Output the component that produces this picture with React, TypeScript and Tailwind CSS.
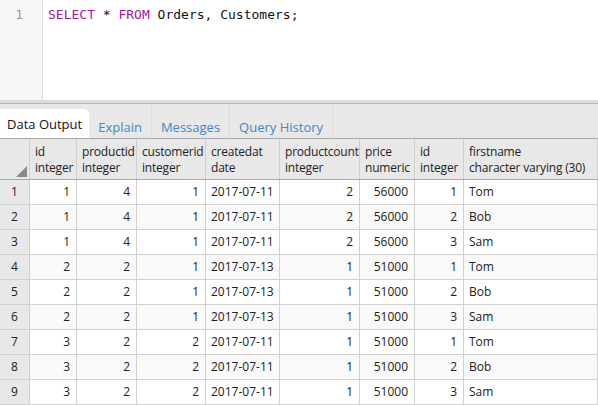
const columns = [
  { name: 'id', type: 'integer', align: 'right' },
  { name: 'productid', type: 'integer', align: 'right' },
  { name: 'customerid', type: 'integer', align: 'right' },
  { name: 'createdat', type: 'date', align: 'left' },
  { name: 'productcount', type: 'integer', align: 'right' },
  { name: 'price', type: 'numeric', align: 'right' },
  { name: 'id', type: 'integer', align: 'right' },
  { name: 'firstname', type: 'character varying (30)', align: 'left' },
];

const rows = [
  ['1', '4', '1', '2017-07-11', '2', '56000', '1', 'Tom'],
  ['1', '4', '1', '2017-07-11', '2', '56000', '2', 'Bob'],
  ['1', '4', '1', '2017-07-11', '2', '56000', '3', 'Sam'],
  ['2', '2', '1', '2017-07-13', '1', '51000', '1', 'Tom'],
  ['2', '2', '1', '2017-07-13', '1', '51000', '2', 'Bob'],
  ['2', '2', '1', '2017-07-13', '1', '51000', '3', 'Sam'],
  ['3', '2', '2', '2017-07-11', '1', '51000', '1', 'Tom'],
  ['3', '2', '2', '2017-07-11', '1', '51000', '2', 'Bob'],
  ['3', '2', '2', '2017-07-11', '1', '51000', '3', 'Sam'],
];

const tabs = ['Explain', 'Messages', 'Query History'];

const gridCols =
  'grid grid-cols-[30px_47px_60px_69px_74px_80px_55px_49px_134px]';

export default function App() {
  return (
    <div
      className="w-[598px] h-[405px] overflow-hidden bg-white text-[13px] text-[#222]"
      style={{ fontFamily: '"Open Sans", "Liberation Sans", sans-serif' }}
    >
      {/* Query editor */}
      <div className="flex h-[100px] bg-white">
        <div className="w-[43px] shrink-0 bg-[#f7f7f7] border-r border-[#dddddd] pt-[6px] pr-[19px] text-right text-[#999] leading-[18px]"
          style={{ fontFamily: '"DejaVu Sans Mono", "Liberation Mono", monospace' }}
        >
          1
        </div>
        <div
          className="pl-[5px] pt-[6px] leading-[18px] text-[13px] text-[#111]"
          style={{ fontFamily: '"DejaVu Sans Mono", "Liberation Mono", monospace' }}
        >
          <span className="text-[#9b1c9b]">SELECT</span> * <span className="text-[#9b1c9b]">FROM</span> Orders, Customers;
        </div>
      </div>

      {/* Splitter */}
      <div className="h-[3px] bg-[#dcdcdc]" />
      <div className="h-px bg-[#b8b8b8]" />

      {/* Tabs */}
      <div className="flex items-end h-[34px] bg-[#e8e8e8]">
        <div className="h-[29px] flex items-center px-[7px] pt-[3px] bg-white rounded-tr-[5px] text-[#111]">
          Data Output
        </div>
        {tabs.map((t) => (
          <div
            key={t}
            className="h-[34px] flex items-center pt-[13px] px-[9px] border-r border-[#dcdcdc] text-[#3f87c8]"
          >
            {t}
          </div>
        ))}
      </div>

      <div className="text-[12px]">
        {/* Grid header */}
        <div className={`${gridCols} border-t border-b border-[#a8a8a8] bg-[#e8e8e8] h-[42px]`}>
          <div className="relative border-r border-[#cfcfcf]">
            <svg className="absolute right-[2px] bottom-[2px]" width="11" height="11" viewBox="0 0 11 11">
              <polygon points="11,0 11,11 0,11" fill="#8a8a8a" />
            </svg>
          </div>
          {columns.map((c, i) => (
            <div
              key={i}
              className="border-r border-[#cfcfcf] pl-[5px] pt-[5px] leading-[16px] tracking-[-0.2px] whitespace-nowrap overflow-hidden"
            >
              <div>{c.name}</div>
              <div>{c.type}</div>
            </div>
          ))}
        </div>

        {/* Grid rows */}
        {rows.map((r, ri) => (
          <div
            key={ri}
            className={`${gridCols} h-[25px] border-b border-[#d0d0d0] ${ri % 2 === 1 ? 'bg-[#f9f9f9]' : 'bg-white'}`}
          >
            <div className="bg-[#e8e8e8] border-r border-[#cfcfcf] flex items-center justify-center">
              {ri + 1}
            </div>
            {r.map((v, ci) => (
              <div
                key={ci}
                className={`border-r border-[#d0d0d0] flex items-center whitespace-nowrap overflow-hidden ${
                  columns[ci].align === 'right' ? 'justify-end pr-[6px]' : 'justify-start pl-[5px]'
                }`}
              >
                {v}
              </div>
            ))}
          </div>
        ))}
      </div>
    </div>
  );
}
